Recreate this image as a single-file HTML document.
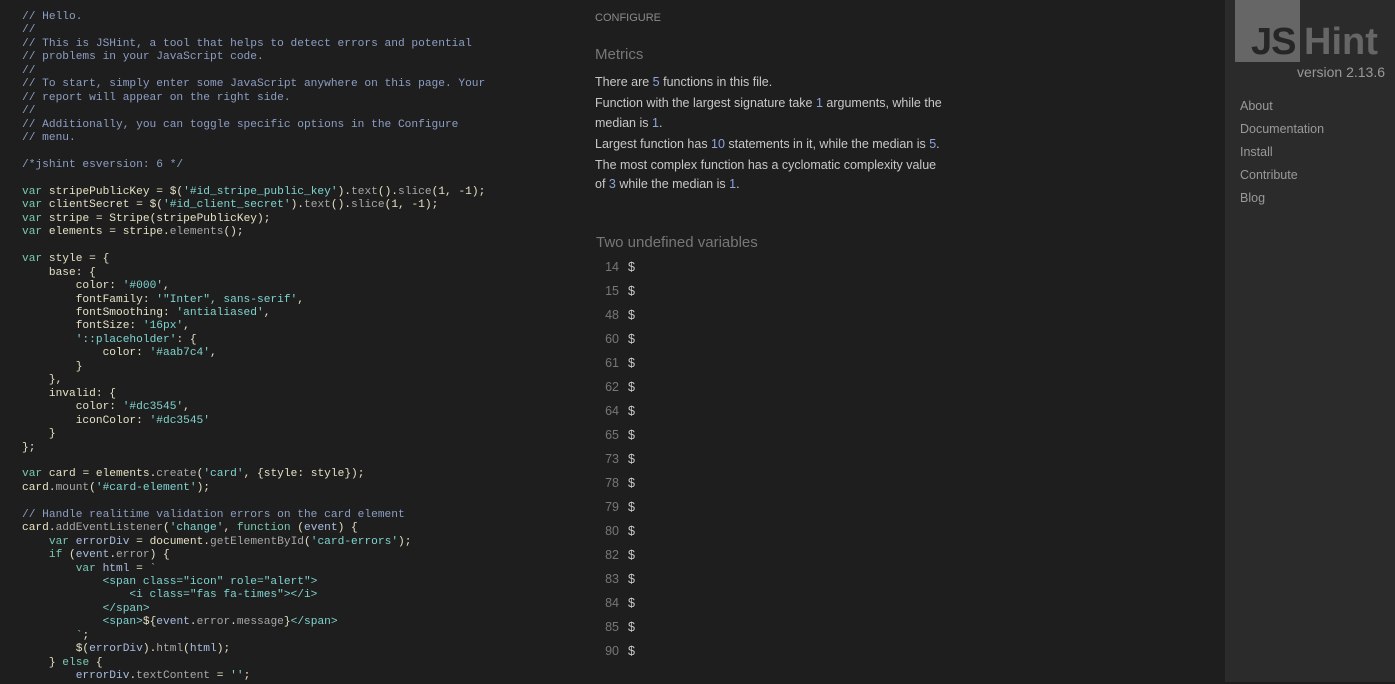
<!DOCTYPE html>
<html><head><meta charset="utf-8"><style>
*{margin:0;padding:0;box-sizing:border-box}
body{width:1395px;height:682px;overflow:hidden;background:#1e1e1e;font-family:"Liberation Sans",sans-serif;position:relative}
#code{position:absolute;left:22px;top:11px;font-family:"Liberation Mono",monospace;font-size:11.2px;line-height:13.45px;color:#e6e1c4;white-space:pre}
.c{color:#8d9ec4}.k{color:#79c9b2}.s{color:#7fd4cf}.p{color:#a8a8a8}.v{color:#a9bde0}
#rep{position:absolute;left:595px;top:0;width:360px;color:#c8c8c8;font-size:12.5px}
.cfg{position:absolute;top:12px;font-size:11px;color:#8a8a8a}
.h{position:absolute;font-size:15px;color:#777}
.m{position:absolute;top:73px;line-height:19.5px;width:350px}
.m p{margin-bottom:1.5px}
.n{color:#8ea3dc}
.row{position:absolute;left:0;font-size:12.5px}
.row .ln{display:inline-block;width:24px;text-align:right;color:#777;margin-right:9px}
#side{position:absolute;left:1225px;top:0;width:170px;height:682px;background:#2b2b2b}
.box{position:absolute;left:10px;top:0;width:65px;height:62px;background:#666}
.js{position:absolute;left:26px;top:22px;font-size:38px;font-weight:bold;color:#262626;letter-spacing:-1px;line-height:40px}
.hint{position:absolute;left:79px;top:22px;font-size:38px;font-weight:bold;color:#666;line-height:40px}
.ver{position:absolute;right:10px;top:64px;font-size:14px;color:#999}
.nav{position:absolute;left:15px;top:95px;font-size:12.5px;color:#999;line-height:23px}
</style></head><body>
<div id="code"><span class="c">// Hello.
//
// This is JSHint, a tool that helps to detect errors and potential
// problems in your JavaScript code.
//
// To start, simply enter some JavaScript anywhere on this page. Your
// report will appear on the right side.
//
// Additionally, you can toggle specific options in the Configure
// menu.</span>

<span class="c">/*jshint esversion: 6 */</span>

<span class="k">var</span> stripePublicKey = $(<span class="s">'#id_stripe_public_key'</span>).<span class="p">text</span>().<span class="p">slice</span>(1, -1);
<span class="k">var</span> clientSecret = $(<span class="s">'#id_client_secret'</span>).<span class="p">text</span>().<span class="p">slice</span>(1, -1);
<span class="k">var</span> stripe = Stripe(stripePublicKey);
<span class="k">var</span> elements = stripe.<span class="p">elements</span>();

<span class="k">var</span> style = {
    base: {
        color: <span class="s">'#000'</span>,
        fontFamily: <span class="s">'"Inter", sans-serif'</span>,
        fontSmoothing: <span class="s">'antialiased'</span>,
        fontSize: <span class="s">'16px'</span>,
        <span class="s">'::placeholder'</span>: {
            color: <span class="s">'#aab7c4'</span>,
        }
    },
    invalid: {
        color: <span class="s">'#dc3545'</span>,
        iconColor: <span class="s">'#dc3545'</span>
    }
};

<span class="k">var</span> card = elements.<span class="p">create</span>(<span class="s">'card'</span>, {style: style});
card.<span class="p">mount</span>(<span class="s">'#card-element'</span>);

<span class="c">// Handle realitime validation errors on the card element</span>
card.<span class="p">addEventListener</span>(<span class="s">'change'</span>, <span class="k">function</span> (<span class="v">event</span>) {
    <span class="k">var</span> <span class="v">errorDiv</span> = document.<span class="p">getElementById</span>(<span class="s">'card-errors'</span>);
    <span class="k">if</span> (<span class="v">event</span>.<span class="p">error</span>) {
        <span class="k">var</span> <span class="v">html</span> = <span class="s">`</span>
<span class="s">            &lt;span class="icon" role="alert"&gt;
                &lt;i class="fas fa-times"&gt;&lt;/i&gt;
            &lt;/span&gt;
            &lt;span&gt;</span>${<span class="v">event</span>.<span class="p">error</span>.<span class="p">message</span>}<span class="s">&lt;/span&gt;
        `</span>;
        $(<span class="v">errorDiv</span>).<span class="p">html</span>(<span class="v">html</span>);
    } <span class="k">else</span> {
        <span class="v">errorDiv</span>.<span class="p">textContent</span> = <span class="s">''</span>;
</div>
<div id="rep">
<div class="cfg">CONFIGURE</div>
<div class="h" style="top:46px">Metrics</div>
<div class="m">
<p>There are <span class="n">5</span> functions in this file.</p>
<p>Function with the largest signature take <span class="n">1</span> arguments, while the median is <span class="n">1</span>.</p>
<p>Largest function has <span class="n">10</span> statements in it, while the median is <span class="n">5</span>.</p>
<p>The most complex function has a cyclomatic complexity value<br>of <span class="n">3</span> while the median is <span class="n">1</span>.</p>
</div>
<div class="h" style="top:234px;left:1px">Two undefined variables</div>
<div class="row" style="top:260px"><span class="ln">14</span>$</div>
<div class="row" style="top:284px"><span class="ln">15</span>$</div>
<div class="row" style="top:308px"><span class="ln">48</span>$</div>
<div class="row" style="top:332px"><span class="ln">60</span>$</div>
<div class="row" style="top:356px"><span class="ln">61</span>$</div>
<div class="row" style="top:380px"><span class="ln">62</span>$</div>
<div class="row" style="top:404px"><span class="ln">64</span>$</div>
<div class="row" style="top:428px"><span class="ln">65</span>$</div>
<div class="row" style="top:452px"><span class="ln">73</span>$</div>
<div class="row" style="top:476px"><span class="ln">78</span>$</div>
<div class="row" style="top:500px"><span class="ln">79</span>$</div>
<div class="row" style="top:524px"><span class="ln">80</span>$</div>
<div class="row" style="top:548px"><span class="ln">82</span>$</div>
<div class="row" style="top:572px"><span class="ln">83</span>$</div>
<div class="row" style="top:596px"><span class="ln">84</span>$</div>
<div class="row" style="top:620px"><span class="ln">85</span>$</div>
<div class="row" style="top:644px"><span class="ln">90</span>$</div>
</div>
<div id="side">
<div class="box"></div>
<div class="js">JS</div>
<div class="hint">Hint</div>
<div class="ver">version 2.13.6</div>
<div class="nav">About<br>Documentation<br>Install<br>Contribute<br>Blog</div>
</div>
</body></html>
